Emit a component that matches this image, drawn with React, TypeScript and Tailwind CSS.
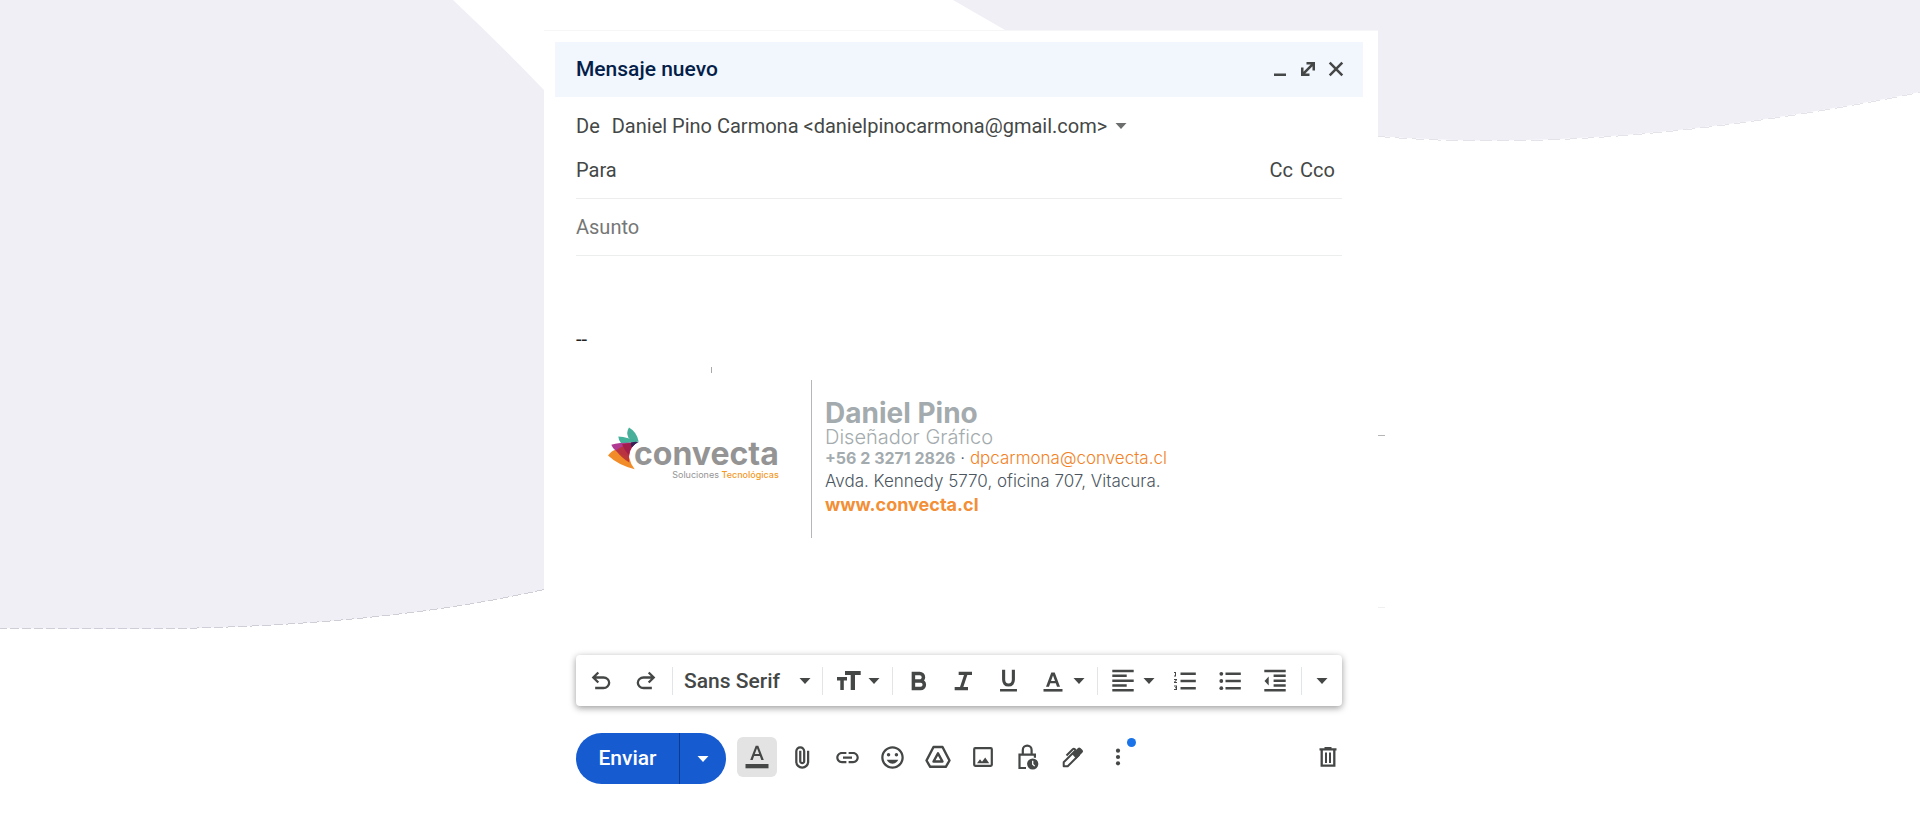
import React from "react";
import { MdLink, MdMood } from "react-icons/md";

const sans = "font-[Roboto,'Liberation_Sans',sans-serif]";
const geo = "font-[Inter,'Open_Sans',sans-serif]";

function Icon({ size = 28, box = 28, children }: { size?: number; box?: number; children: React.ReactNode }) {
  return (
    <svg width={size} height={size} viewBox={`0 0 ${box} ${box}`} fill="currentColor" aria-hidden="true" className="shrink-0">
      {children}
    </svg>
  );
}

function Caret() {
  return (
    <svg width="12" height="6" viewBox="0 0 12 6" fill="currentColor" aria-hidden="true" className="shrink-0">
      <path d="M.5 0h11L6 6z" />
    </svg>
  );
}

const undoPath =
  "M7 19v-2h7.1q1.575 0 2.738-1Q18 15 18 13.5T16.838 11Q15.675 10 14.1 10H7.8l2.6 2.6L9 14 4 9l5-5 1.4 1.4L7.8 8h6.3q2.425 0 4.163 1.575Q20 11.15 20 13.5q0 2.35-1.737 3.925Q16.525 19 14.1 19Z";

const digits = "M2 8.5V7.600h1V5H2v-.9h2v4.400zM2 12.100V11h3v1l-1.800 2.100H5v1H2v-1l1.800-2zM2 17.500h3v4.400H2v-1h2v-.7H3v-1h1v-.7H2z";

function Tool({
  label,
  layout = "w-[45px] justify-center",
  children,
}: {
  label: string;
  layout?: string;
  children: React.ReactNode;
}) {
  return (
    <button type="button" aria-label={label} className={`flex h-10 items-center ${layout}`}>
      {children}
    </button>
  );
}

function Sep() {
  return <span className="h-7 w-px shrink-0 bg-[#e2e4e8]" />;
}

function Background() {
  return (
    <svg className="absolute inset-0 h-full w-full" viewBox="0 0 1920 823" preserveAspectRatio="none" aria-hidden="true">
      <path d="M0 0H453Q500 44 544 90V589.500Q370 629 120 629Q60 629 0 628Z" fill="#f0eff6" />
      <path
        d="M544 589.500Q370 629 120 629Q60 629 0 628"
        fill="none"
        stroke="#cfced6"
        strokeDasharray="9 3"
        shapeRendering="crispEdges"
      />
      <path d="M953 0H1920V92C1730 130 1550 150 1378 136V30H1005Z" fill="#f0eff6" />
      <path
        d="M1378 136.500C1550 150.500 1730 130.500 1920 92.500"
        fill="none"
        stroke="#e4e3e9"
        strokeDasharray="12 5"
        shapeRendering="crispEdges"
      />
      <path d="M1378 435.500h7" stroke="#b5b5b5" />
      <path d="M1378 607.500h7" stroke="#f0f0f0" />
    </svg>
  );
}

function Header() {
  return (
    <header className="ml-[11px] mr-[15px] flex h-[55px] items-center justify-between bg-[#f2f6fd] pb-0.5 pl-[21px] pr-[15px]">
      <h1 className="text-[21px] font-medium leading-6 text-[#041e49]">Mensaje nuevo</h1>
      <div className="flex gap-1 text-[#444746]">
        <button type="button" aria-label="Minimizar" className="flex h-6 w-6 items-center justify-center">
          <Icon size={20} box={20}>
            <path d="M4 14.500h12V17H4z" />
          </Icon>
        </button>
        <button type="button" aria-label="Pantalla completa" className="flex h-6 w-6 items-center justify-center">
          <Icon size={20} box={20}>
            <path d="M8.500 3H17v8.500h-2.500V7.300L7.300 14.500h4.200V17H3V8.500h2.500v4.200l7.200-7.200H8.500z" />
          </Icon>
        </button>
        <button type="button" aria-label="Guardar y cerrar" className="flex h-6 w-6 items-center justify-center">
          <Icon size={20} box={20}>
            <path d="m3.700 3.700 12.600 12.600M16.300 3.700 3.700 16.300" stroke="currentColor" strokeWidth="2.500" />
          </Icon>
        </button>
      </div>
    </header>
  );
}

function Fields() {
  return (
    <div className="flex flex-col pt-[13px] text-[20px] text-[#444746]">
      <div className="flex h-8 items-center gap-3">
        <span>De</span>
        <button type="button" className="flex items-center gap-2">
          Daniel Pino Carmona &lt;danielpinocarmona@gmail.com&gt;
          <span className="text-[#6b6e6d]">
            <Caret />
          </span>
        </button>
      </div>
      <div className="flex h-[57px] items-center border-b border-[#eceded] pr-[7px]">
        <label htmlFor="to">Para</label>
        <input id="to" type="text" className="min-w-0 flex-1 px-3 outline-none" />
        <div className="flex gap-[7px]">
          <button type="button">Cc</button>
          <button type="button">Cco</button>
        </div>
      </div>
      <div className="flex h-[57px] items-center border-b border-[#eceded]">
        <input
          type="text"
          aria-label="Asunto"
          placeholder="Asunto"
          className="w-full min-w-0 outline-none placeholder:text-[#757776] placeholder:opacity-100"
        />
      </div>
    </div>
  );
}

function Logo() {
  return (
    <div className={`flex pt-[46px] ${geo}`}>
      <svg width="32" height="44" viewBox="0 0 32 44" aria-hidden="true" className="shrink-0">
        <path d="M10.300 10.500Q20 11 30.700 16.200Q22 16.500 13.300 17.500Q10.500 14.500 10.300 10.500Z" fill="#45b39c" />
        <path d="M21 1.500Q29 6 30.700 15.800Q23 14.500 20.500 12Q17.800 6.500 21 1.500Z" fill="#2fa58c" opacity=".88" />
        <path d="M0 29.500Q3 25 9.500 22.500L21 31Q22.500 38 26.700 43.200Q10 39 0 29.500Z" fill="#f28c28" />
        <path d="M3.300 18.800Q12 16 29.300 16.500Q20.500 21 20.800 31Q11 28 7.500 24.500Q4.500 22 3.300 18.800Z" fill="#b13a92" />
        <path d="M8 24.500Q16 18 28 17Q19.500 24 21.300 36.500Q13 31.500 8 24.500Z" fill="#b8323a" opacity=".92" />
        <path d="M14 18.300Q21 16.500 29.300 16.500Q21.500 21 20.800 29Q16.500 24.500 14 18.300Z" fill="#a31d4c" />
        <path d="M23 16.500Q27 15.500 30.500 16Q26 18 23.800 21.500Q22.500 19 23 16.500Z" fill="#352358" />
      </svg>
      <div className="-ml-1.5 flex flex-col items-end pt-3">
        <span className="text-[32px] font-bold leading-[31px] text-[#959494]">convecta</span>
        <span className="text-[9px] leading-3 text-[#959494]">
          Soluciones <span className="font-medium text-[#f39a1f]">Tecnológicas</span>
        </span>
      </div>
    </div>
  );
}

function Signature() {
  return (
    <div className="flex pt-[7px]">
      <div className="flex w-[235px] flex-col pl-8">
        <Logo />
      </div>
      <div className="h-[158px] w-px bg-[#b4b6b8]" />
      <address className={`flex flex-col pl-[13px] pt-5 text-[17px] font-light leading-[23px] not-italic text-[#4c5661] ${geo}`}>
        <strong className="text-[28px] font-bold leading-[27px] text-[#a4abae]">Daniel Pino</strong>
        <span className="text-[20px] leading-5 text-[#a4abae]">Diseñador Gráfico</span>
        <span>
          <strong className="text-[16px] font-bold text-[#a4abae]">+56 2 3271 2826</strong> ·{" "}
          <a href="mailto:dpcarmona@convecta.cl" className="text-[#f28226]">
            dpcarmona@convecta.cl
          </a>
        </span>
        <span>Avda. Kennedy 5770, oficina 707, Vitacura.</span>
        <a href="https://www.convecta.cl" className="text-[18px] font-bold text-[#f28f37]">
          www.convecta.cl
        </a>
      </address>
    </div>
  );
}

function FormatBar() {
  return (
    <div
      role="toolbar"
      aria-label="Formato"
      className="flex h-[51px] items-center rounded-sm bg-white pl-0.5 text-[#444746] shadow-[0_2px_7px_rgba(0,0,0,0.4)]"
    >
      <div className="flex pr-1">
        <Tool label="Deshacer">
          <Icon box={24}>
            <path d={undoPath} />
          </Icon>
        </Tool>
        <Tool label="Rehacer">
          <Icon box={24}>
            <path d={undoPath} transform="matrix(-1 0 0 1 24 0)" />
          </Icon>
        </Tool>
      </div>
      <Sep />
      <div className="flex w-[149px] items-center pl-[11px] pr-[11px]">
        <select aria-label="Fuente" className="min-w-0 flex-1 appearance-none text-[21px] font-medium leading-7 outline-none">
          <option>Sans Serif</option>
        </select>
        <Caret />
      </div>
      <Sep />
      <Tool label="Tamaño" layout="w-[69px] gap-1.5 pl-[11px]">
        <Icon>
          <path d="M11 4h15.700v4H21v15h-4.300V8H11zM3 10h10v3.600H9.800V23H6.300v-9.400H3z" />
        </Icon>
        <Caret />
      </Tool>
      <Sep />
      <div className="flex pl-[3px]">
        <Tool label="Negrita">
          <Icon>
            <path
              d="M8.400 6.500h6.300a3.750 3.750 0 0 1 0 7.500H8.400zM8.400 14h7.200a3.750 3.750 0 0 1 0 7.500H8.400z"
              fill="none"
              stroke="currentColor"
              strokeWidth="3.500"
            />
          </Icon>
        </Tool>
        <Tool label="Cursiva">
          <Icon size={32} box={24}>
            <path d="M5 19v-2.500h4l3-9H8V5h10v2.500h-3.500l-3 9H15V19Z" />
          </Icon>
        </Tool>
        <Tool label="Subrayado">
          <Icon size={29} box={24}>
            <path d="M5 21v-2h14v2Zm7-4q-2.525 0-3.925-1.575t-1.400-4.175V3H9.250v8.400q0 1.400.7 2.275.7.875 2.050.875 1.350 0 2.050-.875.7-.875.7-2.275V3h2.575v8.250q0 2.600-1.400 4.175Q14.525 17 12 17Z" />
          </Icon>
        </Tool>
        <Tool label="Color del texto" layout="w-[66px] gap-1.5 pl-2">
          <Icon>
            <path d="M4.500 22h19v2.600h-19z" />
            <path d="M12.300 5.500h3.400L21 19.800h-3l-1.200-3.500h-5.600L10 19.800H7zm1.700 3-2 5.600h4z" />
          </Icon>
          <Caret />
        </Tool>
      </div>
      <Sep />
      <div className="flex pr-1">
        <Tool label="Alinear" layout="w-16 gap-1.5 pl-[11px]">
          <Icon>
            <path d="M3.300 2.800h21.400v2.500H3.300zM3.300 7.600h14.400v2.500H3.300zM3.300 12.400h21.400v2.500H3.300zM3.300 17.200h14.400v2.500H3.300zM3.300 22h21.400v2.500H3.300z" />
          </Icon>
          <Caret />
        </Tool>
        <Tool label="Lista numerada">
          <Icon>
            <path d="M9.500 5.600h15.300V8H9.500zM9.500 12.800h15.300v2.400H9.500zM9.500 20h15.300v2.400H9.500z" />
            <path d={digits} transform="translate(1 1)" />
          </Icon>
        </Tool>
        <Tool label="Lista con viñetas">
          <Icon>
            <path d="M9.500 5.600h15.300V8H9.500zM9.500 12.800h15.300v2.400H9.500zM9.500 20h15.300v2.400H9.500z" />
            <circle cx="5.300" cy="6.800" r="1.900" />
            <circle cx="5.300" cy="14" r="1.900" />
            <circle cx="5.300" cy="21.200" r="1.900" />
          </Icon>
        </Tool>
        <Tool label="Reducir sangría">
          <Icon>
            <path d="M3.300 2.800h21.400v2.500H3.300zM12.600 7.600h12.100v2.500H12.600zM12.600 12.400h12.100v2.500H12.600zM12.600 17.200h12.100v2.500H12.600zM3.300 22h21.400v2.500H3.300zM7.700 9.500v9L3.500 14z" />
          </Icon>
        </Tool>
      </div>
      <Sep />
      <Tool label="Más opciones de formato" layout="flex-1 justify-center">
        <Caret />
      </Tool>
    </div>
  );
}

function ActionBar() {
  return (
    <div className="flex items-center text-[#444746]">
      <div className="flex h-[51px] overflow-hidden rounded-full bg-[#165bd0] text-white">
        <button type="button" className="w-[104px] border-r border-[#0a3b91] text-[21px] font-medium">
          Enviar
        </button>
        <button type="button" aria-label="Más opciones de envío" className="flex w-[46px] items-center justify-center">
          <Caret />
        </button>
      </div>
      <div className="flex flex-1 items-center pb-[3px]">
        <button
          type="button"
          aria-label="Opciones de formato"
          className="ml-[11px] mr-[3px] flex h-10 w-10 items-center justify-center rounded-md bg-[#e3e3e3]"
        >
          <Icon>
            <path d="M2.500 21h23v4.300h-23z" />
            <path d="M12.700 2.700h2.600L20.800 17h-2.500l-1.400-3.900h-5.800L9.700 17H7.200zM14 5.200l-2.200 5.900h4.400z" />
          </Icon>
        </button>
        <Tool label="Adjuntar archivos">
          <Icon size={27} box={24}>
            <path d="M18 15.750q0 2.600-1.825 4.425T11.750 22t-4.425-1.825T5.500 15.750V6.500q0-1.875 1.313-3.187T10 2t3.188 1.313T14.500 6.500v8.750q0 1.150-.8 1.950t-1.950.8-1.950-.8T9 15.250V6h2v9.250q0 .325.213.538t.537.212.538-.213.212-.537V6.500q-.025-1.050-.737-1.775T10 4t-1.775.725T7.500 6.500v9.250q-.025 1.775 1.225 3.013T11.750 20q1.750 0 2.975-1.237T16 15.750V6h2z" />
          </Icon>
        </Tool>
        <Tool label="Insertar enlace">
          <MdLink size={27} />
        </Tool>
        <Tool label="Insertar emoji">
          <MdMood size={27} />
        </Tool>
        <Tool label="Insertar archivos con Drive">
          <Icon>
            <g fill="none" stroke="currentColor" strokeWidth="2.400" strokeLinejoin="round">
              <path d="M9.500 4h9l7 13.500-3.700 6.300H6.200L2.500 17.500z" />
              <path d="m14 10.300 4.500 8.200h-9z" />
            </g>
          </Icon>
        </Tool>
        <Tool label="Insertar foto">
          <Icon>
            <rect x="5.200" y="5.200" width="17.600" height="17.600" rx="1" fill="none" stroke="currentColor" strokeWidth="2.200" />
            <path d="M8 20.200 11 16.300l2 2.500 3.200-4.200 4 5.600z" />
          </Icon>
        </Tool>
        <Tool label="Modo confidencial">
          <Icon>
            <g fill="none" stroke="currentColor" strokeWidth="2.200">
              <path d="M12 25H5.500V11.600h15.400v3.100" />
              <path d="M8.800 11.500V7a4.400 4.400 0 0 1 8.800 0v4.500" />
            </g>
            <circle cx="18.700" cy="21" r="5.600" />
            <path d="M18.700 17.800v3.400l2 1.900" fill="none" stroke="#fff" strokeWidth="1.300" />
          </Icon>
        </Tool>
        <Tool label="Insertar firma">
          <Icon>
            <path d="M4.700 23.300v-4L16 8l4 4L8.700 23.300z" fill="none" stroke="currentColor" strokeWidth="2" strokeLinejoin="round" />
            <path d="M13 11 19 5q1.200-1.200 2.400 0l2.100 2.100q1.200 1.200 0 2.400l-6.200 6.200z" />
            <path d="m7.500 12.500 6.300-6.300q1-1 2 0l1 1" fill="none" stroke="currentColor" strokeWidth="2" />
          </Icon>
        </Tool>
        <div className="relative">
          <Tool label="Más opciones">
            <Icon>
              <circle cx="14" cy="7.700" r="2.100" />
              <circle cx="14" cy="14" r="2.100" />
              <circle cx="14" cy="20.300" r="2.100" />
            </Icon>
          </Tool>
          <span className="absolute right-1 top-px h-[9px] w-[9px] rounded-full bg-[#1a73e8]" />
        </div>
        <button type="button" aria-label="Descartar borrador" className="ml-auto flex h-10 w-7 items-center justify-center">
          <Icon>
            <path d="M10.500 4h7v1.200h5v2.400h-17V5.200h5z" />
            <path d="M7.700 7v15.700h12.600V7" fill="none" stroke="currentColor" strokeWidth="2.300" />
            <path d="M11 9.500h2v10.500h-2zM15 9.500h2v10.500h-2z" />
          </Icon>
        </button>
      </div>
    </div>
  );
}

export default function App() {
  return (
    <div className={`relative min-h-screen bg-white pl-0.5 pt-[30px] ${sans}`}>
      <Background />
      <main className="relative mx-auto w-full max-w-[834px] border-t border-[#f6f6f8] bg-white pb-6 pt-[11px]">
        <Header />
        <div className="flex flex-col pl-8 pr-9">
          <Fields />
          <div className="flex flex-col pt-[69px]">
            <p className="text-[20px] leading-7 text-[#222]">--</p>
            <div className="ml-[135px] mt-[14px] h-1.5 w-px bg-[#a9a9a9]" />
            <Signature />
          </div>
          <div className="pb-[27px] pt-[117px]">
            <FormatBar />
          </div>
          <ActionBar />
        </div>
      </main>
    </div>
  );
}
